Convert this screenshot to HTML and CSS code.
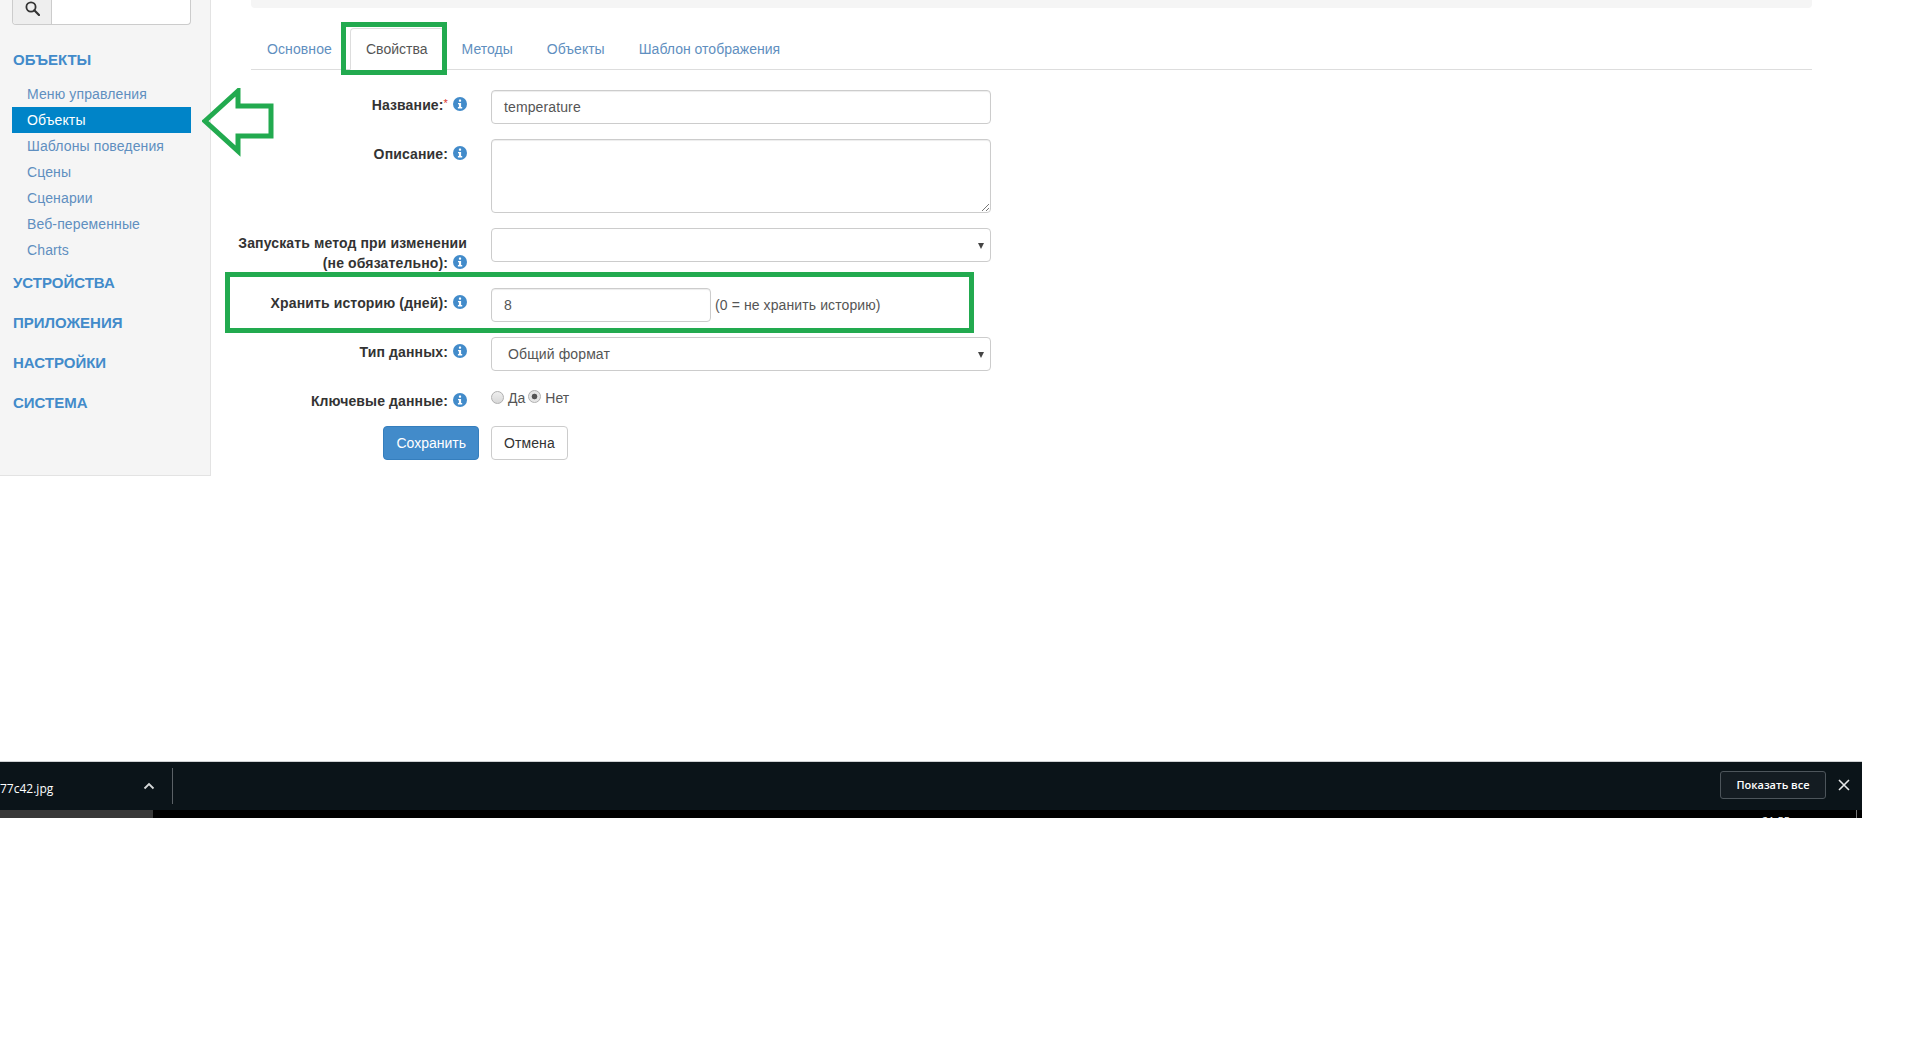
FILE: index.html
```html
<!DOCTYPE html>
<html lang="ru">
<head>
<meta charset="utf-8">
<title>Объекты</title>
<link rel="stylesheet" href="styles.css">
</head>
<body>
<div class="top">
  <aside class="sidebar">
    <div class="search">
      <span class="search-btn"><svg width="15" height="15" viewBox="0 0 15 15"><circle cx="6" cy="6" r="4.600" fill="none" stroke="#333" stroke-width="1.800"/><path d="M9.300 9.300L14 14" stroke="#333" stroke-width="2.200" stroke-linecap="round"/></svg></span>
      <span class="search-input"></span>
    </div>
    <h3 class="sec first">ОБЪЕКТЫ</h3>
    <ul class="menu">
      <li>Меню управления</li>
      <li class="active">Объекты</li>
      <li>Шаблоны поведения</li>
      <li>Сцены</li>
      <li>Сценарии</li>
      <li>Веб-переменные</li>
      <li>Charts</li>
    </ul>
    <h3 class="sec">УСТРОЙСТВА</h3>
    <h3 class="sec">ПРИЛОЖЕНИЯ</h3>
    <h3 class="sec">НАСТРОЙКИ</h3>
    <h3 class="sec">СИСТЕМА</h3>
  </aside>
  <main class="main">
    <div class="crumb"></div>
    <nav class="tabs">
      <a class="tab">Основное</a>
      <a class="tab active">Свойства</a>
      <a class="tab">Методы</a>
      <a class="tab">Объекты</a>
      <a class="tab">Шаблон отображения</a>
    </nav>
    <form class="form">
      <div class="row r-name">
        <label class="lbl">Название:<span class="req">*</span><svg class="info" viewBox="0 0 14 14"><use href="#i"/></svg></label>
        <div class="ctl"><div class="field">temperature</div></div>
      </div>
      <div class="row r-desc">
        <label class="lbl">Описание:<svg class="info" viewBox="0 0 14 14"><use href="#i"/></svg></label>
        <div class="ctl"><div class="field area"><svg class="grip" width="8" height="8" viewBox="0 0 8 8"><path d="M1 8L8 1M5 8L8 5" stroke="#777" stroke-width="1"/></svg></div></div>
      </div>
      <div class="row r-method">
        <label class="lbl two">Запускать метод при изменении<br>(не обязательно):<svg class="info" viewBox="0 0 14 14"><use href="#i"/></svg></label>
        <div class="ctl"><div class="field sel"><span class="caret"></span></div></div>
      </div>
      <div class="row r-hist">
        <label class="lbl">Хранить историю (дней):<svg class="info" viewBox="0 0 14 14"><use href="#i"/></svg></label>
        <div class="ctl inline"><div class="field short">8</div><span class="hint">(0 = не хранить историю)</span></div>
      </div>
      <div class="row r-type">
        <label class="lbl">Тип данных:<svg class="info" viewBox="0 0 14 14"><use href="#i"/></svg></label>
        <div class="ctl"><div class="field sel typed">Общий формат<span class="caret"></span></div></div>
      </div>
      <div class="row r-key">
        <label class="lbl">Ключевые данные:<svg class="info" viewBox="0 0 14 14"><use href="#i"/></svg></label>
        <div class="ctl radios"><span class="radio"></span><span class="rt">Да</span><span class="radio on"></span><span class="rt">Нет</span></div>
      </div>
      <div class="row r-btn">
        <div class="btn-cell"><span class="btn primary">Сохранить</span></div>
        <div class="ctl btn-ctl"><span class="btn">Отмена</span></div>
      </div>
    </form>
  </main>
</div>
<footer class="dl">
  <div class="dl-bar">
    <span class="fname">77c42.jpg</span>
    <svg class="chev" width="12" height="8" viewBox="0 0 12 8"><path d="M1.500 6.500L6 2l4.500 4.500" fill="none" stroke="#d6d8d9" stroke-width="1.800"/></svg>
    <span class="sep"></span>
    <span class="showall">Показать все</span>
    <svg class="close" width="12" height="12" viewBox="0 0 12 12"><path d="M1 1l10 10M11 1L1 11" stroke="#e6e8e9" stroke-width="1.600"/></svg>
  </div>
  <div class="taskbar">
    <span class="tb-app"></span>
    <span class="clock"><span>21:55</span></span>
    <span class="tb-line"></span>
  </div>
</footer>

<svg class="defs" width="0" height="0"><defs><symbol id="i" viewBox="0 0 14 14"><circle cx="7" cy="7" r="7" fill="#428bca"/><rect x="5.900" y="2.500" width="2.200" height="2.200" rx=".6" fill="#fff"/><path d="M5 6h3.100v4.100H9.200v1.300H4.900v-1.300h1v-2.800H5z" fill="#fff"/></symbol></defs></svg>

<svg class="mark mark-arrow" width="72" height="70" viewBox="0 0 72 70"><path d="M3 33L36 3V18H69V48H36V63Z" fill="none" stroke="#22aa4f" stroke-width="5"/></svg>
<div class="mark mark-tab"></div>
<div class="mark mark-hist"></div>
</body>
</html>
```

FILE: styles.css
```css
* { box-sizing: border-box; }
html, body { margin: 0; padding: 0; background: #fff; }
body { font-family: "Liberation Sans", Arial, sans-serif; font-size: 14px; color: #333; position: relative; min-height: 1048px; overflow: hidden; }
.top { display: flex; height: 761px; align-items: flex-start; }
.sidebar { width: 211px; height: 476px; flex: none; background: #f5f5f5; border-right: 1px solid #e3e3e3; border-bottom: 1px solid #e3e3e3; padding: 0 19px 0 12px; }
.search { display: flex; height: 25px; border: 1px solid #ccc; border-top: 0; border-radius: 0 0 4px 4px; background: #fff; overflow: hidden; }
.search-btn { width: 39px; background: #eee; border-right: 1px solid #ccc; display: flex; align-items: center; justify-content: center; padding-bottom: 7px; }
.search-input { flex: 1; }
.sec { margin: 0 0 0 1px; font-size: 15px; line-height: 20px; height: 40px; padding-top: 10px; font-weight: 700; color: #428bca; }
.sec.first { margin-top: 15px; padding-top: 10px; height: 41px; }
.menu { list-style: none; margin: 0; padding: 0; }
.menu li { height: 26px; line-height: 26px; padding-left: 15px; color: #5f8fc0; letter-spacing: .12px; }
.menu li.active { background: #0084c8; color: #fff; }
.main { width: 1561px; margin-left: 40px; flex: none; }
.crumb { height: 8px; background: #f5f5f5; border-radius: 0 0 4px 4px; }
.tabs { display: flex; height: 62px; padding: 20px 0 0 0; border-bottom: 1px solid #ddd; }
.tab { height: 42px; line-height: 42px; padding: 0 16px; margin-right: 2px; color: #5f8fc0; white-space: nowrap; letter-spacing: .02px; }
.tab:first-child { letter-spacing: .1px; }
.tab.active { color: #555; background: #fff; border: 1px solid #ddd; border-bottom-color: #fff; border-radius: 4px 4px 0 0; line-height: 40px; padding: 0 15px; height: 42px; }
.form { padding-top: 20px; width: 760px; margin-left: -20px; }
.row { display: flex; }
.lbl { width: 236px; flex: none; font-weight: 700; text-align: right; line-height: 20px; padding-top: 5px; color: #333; white-space: nowrap; letter-spacing: .13px; }
.r-name .lbl { padding-top: 3px; }
.req { color: #d9322e; font-weight: 400; font-size: 11px; vertical-align: 3px; }
.info { width: 14px; height: 14px; margin-left: 5px; vertical-align: -1px; }
.ctl { margin-left: 24px; width: 500px; }
.field { height: 34px; border: 1px solid #ccc; border-radius: 4px; background: #fff; color: #555; padding: 0 12px; line-height: 33px; box-shadow: inset 0 1px 1px rgba(0,0,0,.075); position: relative; letter-spacing: .12px; }
.area { height: 74px; }
.grip { position: absolute; right: 1px; bottom: 1px; }
.sel { box-shadow: none; }
.typed { padding-left: 16px; }
.caret { position: absolute; right: 6px; top: 14px; border-left: 3px solid transparent; border-right: 3px solid transparent; border-top: 6px solid #444; }
.inline { display: flex; align-items: center; height: 34px; }
.short { width: 220px; flex: none; }
.hint { margin-left: 4px; color: #555; letter-spacing: .1px; }
.r-name { height: 49px; }
.r-desc { height: 89px; }
.r-method { height: 60px; }
.r-hist { height: 49px; }
.r-type { height: 50px; }
.r-key { height: 39px; }
.r-key .lbl { padding-top: 4px; }
.radios { display: flex; align-items: center; height: 22px; color: #555; }
.radio { width: 13px; height: 13px; border-radius: 50%; border: 1px solid #b0b0b0; background: linear-gradient(#eee, #d8d8d8); margin-top: -2px; }
.radio.on { background: radial-gradient(circle, #555 0 2.500px, #e6e6e6 3.200px); margin-top: -4px; }
.rt { margin: 0 3px 0 4px; }
.btn-cell { width: 248px; flex: none; text-align: right; }
.btn-ctl { margin-left: 12px; }
.r-btn { height: 34px; }
.btn { display: inline-block; height: 34px; line-height: 32px; padding: 0 12px; border: 1px solid #ccc; border-radius: 4px; background: #fff; color: #333; letter-spacing: .1px; }
.btn.primary { background: #428bca; border-color: #357ebd; color: #fff; letter-spacing: 0; }
.dl { width: 1862px; height: 57px; overflow: hidden; font-family: "Open Sans", "Noto Sans", sans-serif; }
.dl-bar { height: 49px; background: #0b1419; border-top: 1px solid #d0d2d3; display: flex; align-items: center; color: #fff; position: relative; }
.fname { font-size: 12px; width: 143px; margin-top: 4px; }
.chev { margin-left: 0; margin-top: -1px; }
.sep { width: 1px; height: 36px; background: #5b6166; margin-left: 17px; }
.showall { margin-left: auto; width: 106px; height: 28px; line-height: 26px; text-align: center; border: 1px solid #4d555b; border-radius: 3px; background: #141c22; font-size: 11px; font-weight: 600; margin-top: -2px; }
.close { margin: -2px 12px 0 12px; }
.taskbar { height: 8px; background: #000; position: relative; display: flex; }
.tb-app { width: 153px; background: #383838; }
.clock { position: absolute; left: 1762px; top: 4px; color: #fff; font-size: 11px; line-height: 14px; }
.tb-line { position: absolute; right: 5px; top: 0; width: 1px; height: 8px; background: #777; }
.defs { position: absolute; }
.mark { position: absolute; }
.mark-arrow { left: 202px; top: 88px; }
.mark-tab { left: 341px; top: 22px; width: 106px; height: 53px; border: 5px solid #22aa4f; }
.mark-hist { left: 225px; top: 272px; width: 749px; height: 61px; border: 5px solid #22aa4f; }
```
